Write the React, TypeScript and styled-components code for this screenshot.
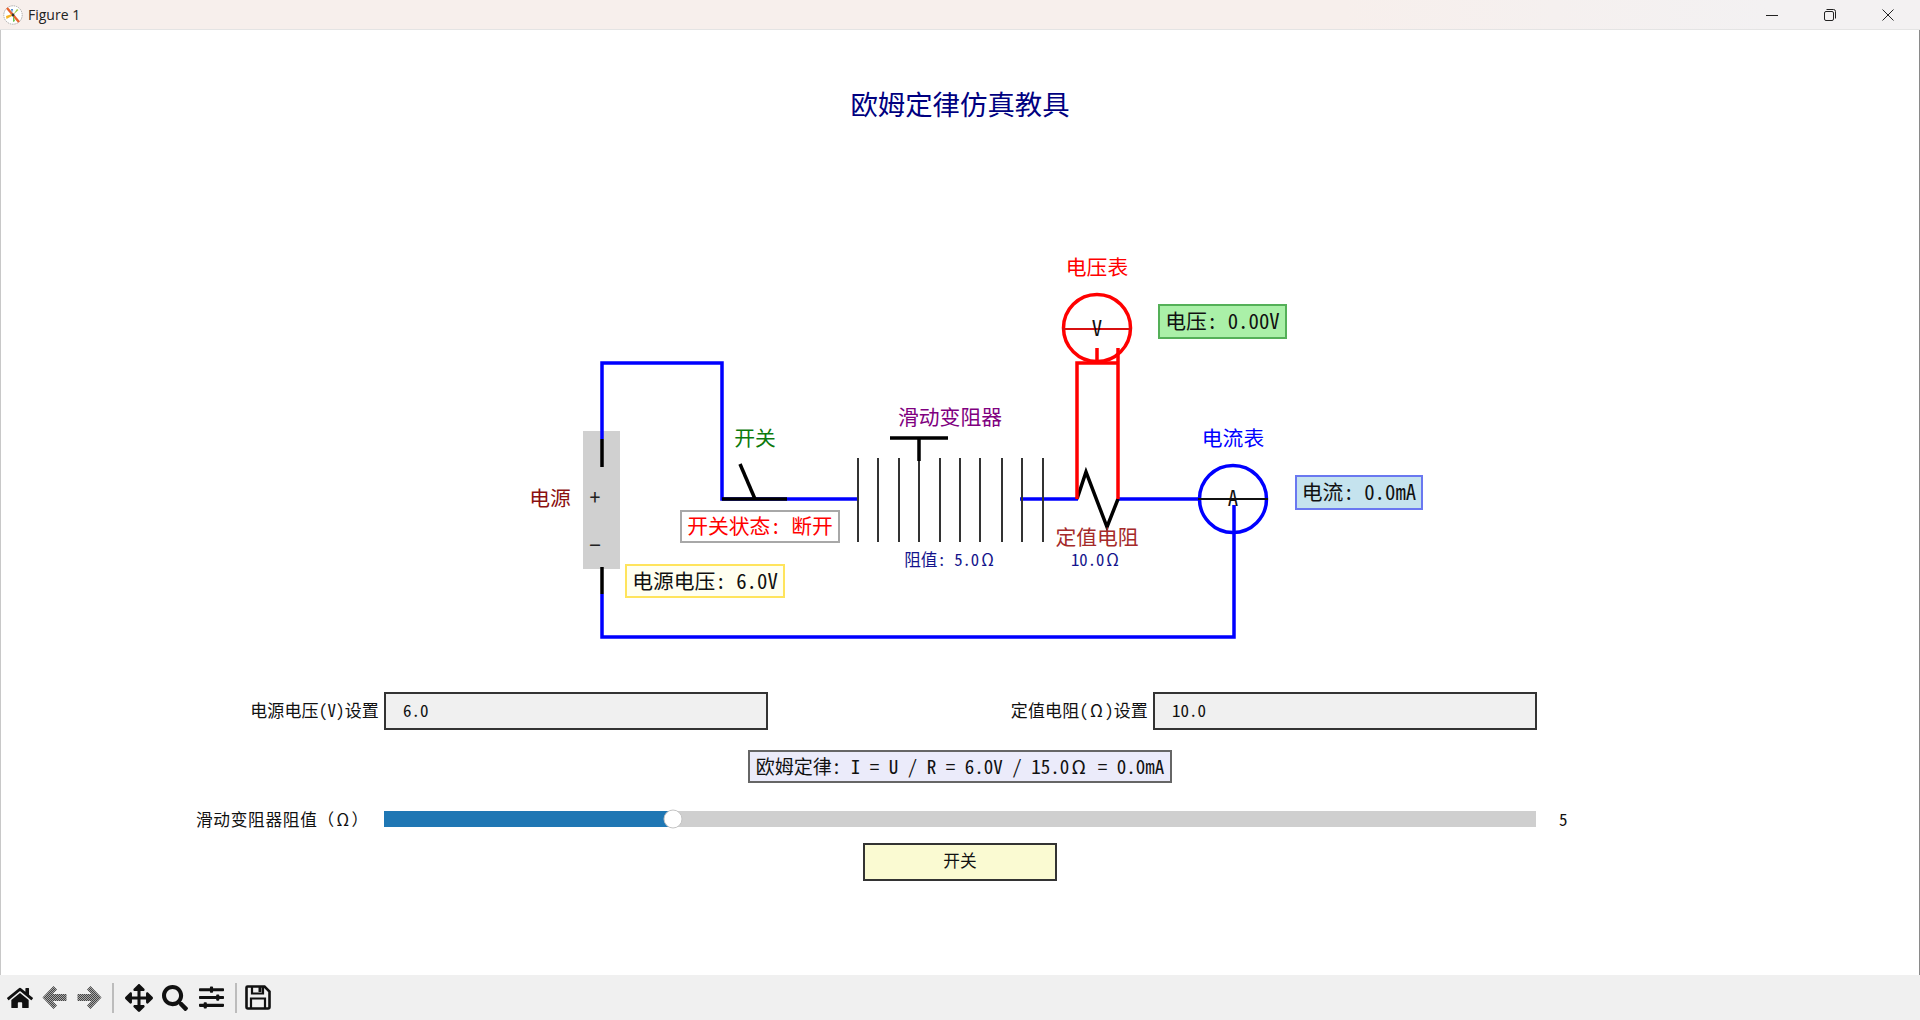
import * as React from "react";
import styled, { createGlobalStyle } from "styled-components";
import { FaHome, FaArrowsAlt, FaSearch, FaSlidersH } from "react-icons/fa";

const SIMHEI = `"Noto Sans Mono CJK SC", "Noto Sans CJK SC", "Liberation Mono", monospace`;
const DIAGRAM_TOP = 240;

const GlobalStyle = createGlobalStyle`
	html, body {
		margin: 0;
		padding: 0;
		background: #fff;
		overflow: hidden;
	}
	* {
		box-sizing: border-box;
	}
`;

const Page = styled.div`
	width: 1920px;
	height: 1020px;
	display: flex;
	flex-direction: column;
	font-family: ${SIMHEI};
	color: #111;
`;

const TitleBar = styled.div`
	height: 30px;
	flex: none;
	display: flex;
	align-items: center;
	padding: 0 3px;
	background: linear-gradient(to right, #f7efec, #f7efec 70%, #f3f1f2 92%);
	border-bottom: 1px solid #e4e4e4;
`;

const WindowTitle = styled.span`
	margin-left: 5px;
	font: 14px "Open Sans", "Liberation Sans", sans-serif;
	color: #222;
	flex: 1;
`;

const WindowButton = styled.div`
	width: 58px;
	height: 28px;
	display: flex;
	align-items: center;
	justify-content: center;
`;

const Canvas = styled.div`
	flex: 1;
	display: flex;
	flex-direction: column;
	background: #fff;
	box-shadow: inset 1px 0 0 #c8c8c8, inset -1px 0 0 #8a8a8a;
`;

const PlotTitle = styled.h1`
	margin: 55px 0 0;
	height: 36px;
	line-height: 36px;
	text-align: center;
	font-size: 27.4px;
	font-weight: 400;
	color: #000080;
`;

const Diagram = styled.div`
	position: relative;
	margin-top: 119px;
	height: 452px;
	flex: none;
`;

const Wiring = styled.svg`
	display: block;
`;

const Caption = styled.span<{ $x: number; $y: number; $color: string; $size?: number }>`
	position: absolute;
	left: ${p => p.$x}px;
	top: ${p => p.$y - DIAGRAM_TOP}px;
	transform: translate(-50%, -50%);
	font-size: ${p => p.$size ?? 20.8}px;
	line-height: 1;
	white-space: pre;
	color: ${p => p.$color};
`;

// the omega is a full cell wide in the plot font
const Omega = styled.span`
	display: inline-block;
	width: 1em;
	text-align: center;
`;

const Readout = styled.div<{ $x: number; $y: number; $w: number; $h: number; $bg: string; $edge: string; $color?: string }>`
	position: absolute;
	left: ${p => p.$x}px;
	top: ${p => p.$y - DIAGRAM_TOP}px;
	width: ${p => p.$w}px;
	height: ${p => p.$h}px;
	padding-bottom: 3px;
	display: flex;
	align-items: center;
	justify-content: center;
	background: ${p => p.$bg};
	border: 2px solid ${p => p.$edge};
	font-size: 20.8px;
	white-space: pre;
	color: ${p => p.$color ?? "#111"};
`;

const FieldRow = styled.div`
	display: flex;
	height: 38px;
	flex: none;
`;

const Field = styled.div<{ $w: number }>`
	width: ${p => p.$w}px;
	display: flex;
	justify-content: flex-end;
	align-items: center;
	gap: 5px;
`;

const FieldLabel = styled.label`
	font-size: 17px;
	white-space: pre;
	padding-bottom: 4px;
	letter-spacing: 0.15px;
`;

const FieldBox = styled.div`
	width: 384px;
	height: 38px;
	display: flex;
	align-items: center;
	padding: 0 0 4px 17px;
	background: #f0f0f0;
	border: 2px solid #333;
	font-size: 17px;
`;

const LawRow = styled.div`
	display: flex;
	justify-content: center;
	margin-top: 20px;
	flex: none;
`;

const LawBox = styled.div`
	width: 424px;
	height: 33px;
	padding-bottom: 2px;
	display: flex;
	align-items: center;
	justify-content: center;
	background: #ebebfa;
	border: 2px solid #666;
	font-size: 19px;
	white-space: pre;
`;

const SliderRow = styled.div`
	display: flex;
	align-items: center;
	height: 16px;
	margin-top: 28px;
	padding-left: 196px;
	flex: none;
`;

const SliderLabel = styled.span`
	width: 188px;
	font-size: 16.67px;
	letter-spacing: 0.7px;
	white-space: pre;
`;

const Track = styled.div`
	position: relative;
	width: 1152px;
	height: 16px;
	background: #cfcfcf;
`;

const TrackFill = styled.div`
	height: 100%;
	background: #1f77b4;
`;

const Thumb = styled.div`
	position: absolute;
	top: 50%;
	width: 19px;
	height: 19px;
	transform: translate(-50%, -50%);
	border-radius: 50%;
	background: #fff;
	border: 1px solid #c4c4c4;
`;

const SliderValue = styled.span`
	margin-left: 23px;
	padding-bottom: 2px;
	font-size: 17px;
`;

const ButtonRow = styled.div`
	display: flex;
	justify-content: center;
	margin-top: 16px;
	flex: none;
`;

const SwitchButton = styled.div`
	width: 194px;
	height: 38px;
	padding-bottom: 4px;
	display: flex;
	align-items: center;
	justify-content: center;
	background: #fafad2;
	border: 2px solid #333;
	font-size: 16.67px;
`;

const Toolbar = styled.div`
	height: 45px;
	flex: none;
	display: flex;
	align-items: center;
	padding-left: 3px;
	background: #f0f0f0;
`;

const ToolButton = styled.div<{ $w?: number }>`
	width: ${p => p.$w ?? 36.5}px;
	height: 36px;
	display: flex;
	align-items: center;
	justify-content: center;
	color: #111;
`;

const ToolSeparator = styled.div<{ $after: number }>`
	width: 2px;
	height: 30px;
	margin: 0 ${p => p.$after}px 0 5px;
	background: #bcbcbc;
`;

function AppLogo() {
	return (
		<svg width="20" height="20" viewBox="0 0 20 20">
			<circle cx="10" cy="10" r="9.2" fill="#fff" stroke="#9a9a9a" strokeWidth="0.8" strokeDasharray="1.5 0.8" />
			<path d="M4 3 L16 17" stroke="#e8622c" strokeWidth="2.4" />
			<path d="M9 9 L3 11 L3.5 14 L9 11 Z" fill="#f5b325" />
			<path d="M10 10 L14 4 L15.5 5 Z" fill="#9ac83c" />
			<path d="M10 10 L12 16 L10 17 Z" fill="#6cc24a" />
			<path d="M9 8 L8 4 L10 4 Z" fill="#3f7fc4" />
			<circle cx="10" cy="10" r="1.4" fill="#333" />
		</svg>
	);
}

function WindowControls() {
	return (
		<>
			<WindowButton>
				<svg width="12" height="12" viewBox="0 0 12 12">
					<path d="M0 6.5 H12" stroke="#222" strokeWidth="1" />
				</svg>
			</WindowButton>
			<WindowButton>
				<svg width="12" height="12" viewBox="0 0 12 12" fill="none" stroke="#222" strokeWidth="1">
					<rect x="0.5" y="2.5" width="9" height="9" rx="1.5" />
					<path d="M2.5 0.5 H9.5 Q11.5 0.5 11.5 2.5 V9.5" />
				</svg>
			</WindowButton>
			<WindowButton>
				<svg width="12" height="12" viewBox="0 0 12 12">
					<path d="M0.5 0.5 L11.5 11.5 M11.5 0.5 L0.5 11.5" stroke="#222" strokeWidth="1" />
				</svg>
			</WindowButton>
		</>
	);
}

// back and forward are greyed out by a stipple in the toolbar
function StippleArrow({ flip, id }: { flip?: boolean; id: string }) {
	return (
		<svg width="25" height="25" viewBox="0 0 25 25">
			<defs>
				<pattern id={id} width="2" height="2" patternUnits="userSpaceOnUse">
					<rect width="2" height="2" fill="#a8a8a8" />
					<rect width="1" height="1" fill="#444" />
					<rect x="1" y="1" width="1" height="1" fill="#444" />
				</pattern>
			</defs>
			<path
				transform={flip ? "translate(25 0) scale(-1 1)" : undefined}
				d="M0.5 12.5 L11.5 1 L15 4.5 L10.5 9 H24.5 V16 H10.5 L15 20.5 L11.5 24 Z"
				fill={`url(#${id})`}
			/>
		</svg>
	);
}

function SaveIcon() {
	return (
		<svg width="26" height="25" viewBox="0 0 26 25" fill="none" stroke="#111">
			<path d="M2.5 1.5 H19.5 L24.5 6.5 V22 Q24.5 23.5 23 23.5 H3 Q1.5 23.5 1.5 22 V2.5 Q1.5 1.5 2.5 1.5 Z" strokeWidth="2.6" />
			<path d="M7 2 V8.5 H18 V2" strokeWidth="2.2" />
			<rect x="13.5" y="2" width="3" height="5" fill="#111" stroke="none" />
			<path d="M6 23 V13.5 H20 V23" strokeWidth="2.2" />
		</svg>
	);
}

const RHEOSTAT_BARS = [858, 878, 899, 919, 940, 960, 980, 1002, 1022, 1043];

function CircuitDrawing() {
	return (
		<Wiring width="1920" height="452" viewBox={`0 ${DIAGRAM_TOP} 1920 452`} fill="none">
			<rect x="583" y="431" width="37" height="138" fill="#d0d0d0" />

			{/* main loop */}
			<g stroke="#0000ff" strokeWidth="3.5">
				<path d="M602 439 V363 H722 V499 H787" />
				<path d="M787 499 H859" />
				<path d="M1020 499 H1078" />
				<path d="M1118 499 H1198" />
				<path d="M602 594 V637 H1234 V505" />
			</g>

			{/* battery terminals and switch */}
			<g stroke="#000" strokeWidth="3.5">
				<path d="M602 439 V467" />
				<path d="M602 567 V594" />
				<path d="M722 499 H787" />
				<path d="M740 464 L755 499" />
			</g>

			{/* rheostat */}
			<g stroke="#333" strokeWidth="2">
				{RHEOSTAT_BARS.map(x => (
					<path key={x} d={`M${x} 458 V542`} />
				))}
			</g>
			<path d="M890 438 H948 M919 438 V461" stroke="#000" strokeWidth="3.5" />

			{/* fixed resistor */}
			<path d="M1077 499 L1086 472 L1107 527 L1118 499" stroke="#000" strokeWidth="3.5" />

			{/* voltmeter */}
			<circle cx="1097" cy="328" r="33.5" stroke="#ff0000" strokeWidth="3.5" fill="#fff" />
			<path d="M1062 329 H1132" stroke="#d81010" strokeWidth="2" />
			<path d="M1097 348 V363 M1118 348 V499 M1077 499 V363 H1118" stroke="#ff0000" strokeWidth="3.5" />

			{/* ammeter */}
			<circle cx="1233" cy="499" r="33.5" stroke="#0000ff" strokeWidth="3.5" />
			<path d="M1198 499 H1268" stroke="#111" strokeWidth="2" />
		</Wiring>
	);
}

export default function App() {
	return (
		<Page>
			<GlobalStyle />
			<TitleBar>
				<AppLogo />
				<WindowTitle>Figure 1</WindowTitle>
				<WindowControls />
			</TitleBar>

			<Canvas>
				<PlotTitle>欧姆定律仿真教具</PlotTitle>

				<Diagram>
					<CircuitDrawing />
					<Caption $x={550} $y={497} $color="#8b1010">电源</Caption>
					<Caption $x={595} $y={496} $color="#222">+</Caption>
					<Caption $x={595} $y={544} $color="#222">−</Caption>
					<Caption $x={755} $y={437} $color="#0c7a0c">开关</Caption>
					<Caption $x={950} $y={416} $color="#800080">滑动变阻器</Caption>
					<Caption $x={950} $y={559} $color="#14148c" $size={16.67}>阻值: 5.0<Omega>Ω</Omega></Caption>
					<Caption $x={1097} $y={536} $color="#a52a2a">定值电阻</Caption>
					<Caption $x={1096} $y={559} $color="#14148c" $size={16.67}>10.0<Omega>Ω</Omega></Caption>
					<Caption $x={1097} $y={266} $color="#ff0000">电压表</Caption>
					<Caption $x={1097} $y={327} $color="#111">V</Caption>
					<Caption $x={1233} $y={437} $color="#0000ff">电流表</Caption>
					<Caption $x={1233} $y={497} $color="#111">A</Caption>

					<Readout $x={680} $y={510} $w={160} $h={33} $bg="#fff" $edge="#a8a8a8" $color="#ff0000">开关状态: 断开</Readout>
					<Readout $x={625} $y={564} $w={160} $h={34} $bg="#fffff0" $edge="#ffe45c">电源电压: 6.0V</Readout>
					<Readout $x={1158} $y={304} $w={129} $h={35} $bg="#aaf0a8" $edge="#54b058">电压: 0.00V</Readout>
					<Readout $x={1295} $y={475} $w={128} $h={35} $bg="#c5e3ee" $edge="#6a78f0">电流: 0.0mA</Readout>
				</Diagram>

				<FieldRow>
					<Field $w={768}>
						<FieldLabel>电源电压(V)设置</FieldLabel>
						<FieldBox>6.0</FieldBox>
					</Field>
					<Field $w={769}>
						<FieldLabel>定值电阻(<Omega>Ω</Omega>)设置</FieldLabel>
						<FieldBox>10.0</FieldBox>
					</Field>
				</FieldRow>

				<LawRow>
					<LawBox>欧姆定律: I = U / R = 6.0V / 15.0<Omega>Ω</Omega> = 0.0mA</LawBox>
				</LawRow>

				<SliderRow>
					<SliderLabel>滑动变阻器阻值（<Omega>Ω</Omega>）</SliderLabel>
					<Track>
						<TrackFill style={{ width: `${(5 / 20) * 100 + 0.1}%` }} />
						<Thumb style={{ left: `${(5 / 20) * 100 + 0.1}%` }} />
					</Track>
					<SliderValue>5</SliderValue>
				</SliderRow>

				<ButtonRow>
					<SwitchButton>开关</SwitchButton>
				</ButtonRow>
			</Canvas>

			<Toolbar>
				<ToolButton $w={34.5}><FaHome size={26} /></ToolButton>
				<ToolButton $w={34.5}><StippleArrow id="back-stipple" /></ToolButton>
				<ToolButton $w={34.5}><StippleArrow id="forward-stipple" flip /></ToolButton>
				<ToolSeparator $after={7} />
				<ToolButton><FaArrowsAlt size={28} /></ToolButton>
				<ToolButton><FaSearch size={26} /></ToolButton>
				<ToolButton><FaSlidersH size={25} /></ToolButton>
				<ToolSeparator $after={3} />
				<ToolButton><SaveIcon /></ToolButton>
			</Toolbar>
		</Page>
	);
}
